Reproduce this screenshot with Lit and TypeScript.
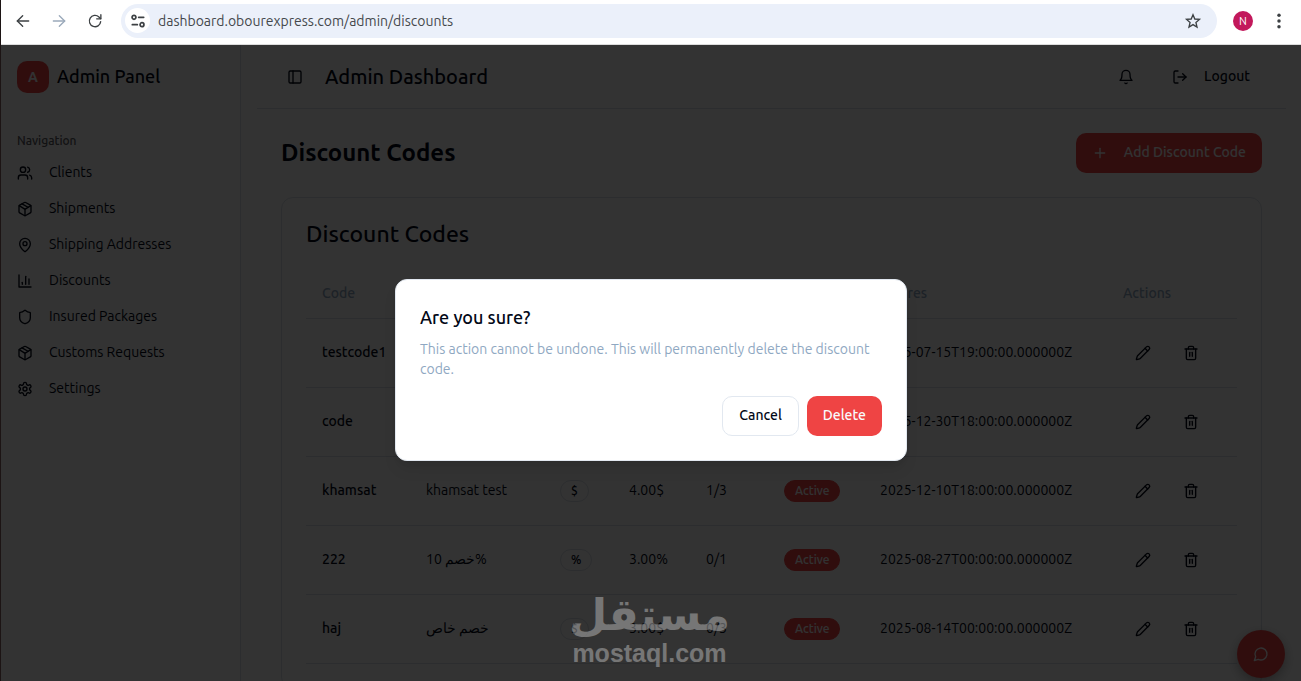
import { LitElement, html, css, svg } from "lit";
import { customElement, property, state } from "lit/decorators.js";

const ICONS: Record<string, unknown> = {
  users: svg`<path d="M16 21v-2a4 4 0 0 0-4-4H6a4 4 0 0 0-4 4v2"/><circle cx="9" cy="7" r="4"/><path d="M22 21v-2a4 4 0 0 0-3-3.87"/><path d="M16 3.13a4 4 0 0 1 0 7.75"/>`,
  box: svg`<path d="M11 21.73a2 2 0 0 0 2 0l7-4A2 2 0 0 0 21 16V8a2 2 0 0 0-1-1.73l-7-4a2 2 0 0 0-2 0l-7 4A2 2 0 0 0 3 8v8a2 2 0 0 0 1 1.73z"/><path d="M12 22V12"/><path d="m3.3 7 7.703 4.734a2 2 0 0 0 1.994 0L20.7 7"/><path d="m7.5 4.27 9 5.15"/>`,
  pin: svg`<path d="M20 10c0 4.993-5.539 10.193-7.399 11.799a1 1 0 0 1-1.202 0C9.539 20.193 4 14.993 4 10a8 8 0 0 1 16 0"/><circle cx="12" cy="10" r="3"/>`,
  chart: svg`<path d="M3 3v18h18"/><path d="M18 17V9"/><path d="M13 17V5"/><path d="M8 17v-3"/>`,
  shield: svg`<path d="M20 13c0 5-3.5 7.5-7.66 8.95a1 1 0 0 1-.67-.01C7.5 20.5 4 18 4 13V6a1 1 0 0 1 1-1c2 0 4.5-1.2 6.24-2.72a1.17 1.17 0 0 1 1.52 0C14.51 3.81 17 5 19 5a1 1 0 0 1 1 1z"/>`,
  gear: svg`<path d="M12.22 2h-.44a2 2 0 0 0-2 2v.18a2 2 0 0 1-1 1.73l-.43.25a2 2 0 0 1-2 0l-.15-.08a2 2 0 0 0-2.73.73l-.22.38a2 2 0 0 0 .73 2.73l.15.1a2 2 0 0 1 1 1.72v.51a2 2 0 0 1-1 1.74l-.15.09a2 2 0 0 0-.73 2.73l.22.38a2 2 0 0 0 2.73.73l.15-.08a2 2 0 0 1 2 0l.43.25a2 2 0 0 1 1 1.73V20a2 2 0 0 0 2 2h.44a2 2 0 0 0 2-2v-.18a2 2 0 0 1 1-1.73l.43-.25a2 2 0 0 1 2 0l.15.08a2 2 0 0 0 2.73-.73l.22-.39a2 2 0 0 0-.73-2.73l-.15-.08a2 2 0 0 1-1-1.74v-.5a2 2 0 0 1 1-1.74l.15-.09a2 2 0 0 0 .73-2.73l-.22-.38a2 2 0 0 0-2.73-.73l-.15.08a2 2 0 0 1-2 0l-.43-.25a2 2 0 0 1-1-1.73V4a2 2 0 0 0-2-2z"/><circle cx="12" cy="12" r="3"/>`,
  panel: svg`<rect x="3" y="3" width="18" height="18" rx="2"/><path d="M9 3v18"/>`,
  bell: svg`<path d="M6 8a6 6 0 0 1 12 0c0 7 3 9 3 9H3s3-2 3-9"/><path d="M10.3 21a1.94 1.94 0 0 0 3.4 0"/>`,
  logout: svg`<path d="M9 21H5a2 2 0 0 1-2-2V5a2 2 0 0 1 2-2h4"/><path d="m16 17 5-5-5-5"/><path d="M21 12H9"/>`,
  plus: svg`<path d="M5 12h14"/><path d="M12 5v14"/>`,
  pencil: svg`<path d="M21.174 6.812a1 1 0 0 0-3.986-3.987L3.842 16.174a2 2 0 0 0-.5.83l-1.321 4.352a.5.5 0 0 0 .623.622l4.353-1.32a2 2 0 0 0 .83-.497z"/><path d="m15 5 4 4"/>`,
  trash: svg`<path d="M3 6h18"/><path d="M19 6v14c0 1-1 2-2 2H7c-1 0-2-1-2-2V6"/><path d="M8 6V4c0-1 1-2 2-2h4c1 0 2 1 2 2v2"/><path d="M10 11v6"/><path d="M14 11v6"/>`,
  chat: svg`<path d="M7.9 20A9 9 0 1 0 4 16.1L2 22Z"/>`,
  back: svg`<path d="M20.500 12H3.500"/><path d="m11.500 4-8 8 8 8"/>`,
  forward: svg`<path d="M3.500 12h17"/><path d="m12.500 4 8 8-8 8"/>`,
  reload: svg`<path d="M20.500 13a8.500 8.500 0 1 1-2.600-7.100L20.500 8.500"/><path d="M20.800 2.500v6.300h-6.300"/>`,
  star: svg`<path d="m12 2.500 2.700 6.500 7 .6-5.300 4.600 1.600 6.900-6-3.700-6 3.700 1.600-6.900L2.300 9.600l7-.6z" stroke-linejoin="miter"/>`,
  tune: svg`<g stroke-width="2.600"><circle cx="6" cy="6.500" r="2.900"/><path d="M13 6.500h7.500"/><path d="M3.500 17.500H11"/><circle cx="18" cy="17.500" r="2.900"/></g>`,
  dots: svg`<g fill="currentColor" stroke="none"><circle cx="12" cy="3.500" r="2.600"/><circle cx="12" cy="12" r="2.600"/><circle cx="12" cy="20.500" r="2.600"/></g>`,
};

@customElement("line-icon")
class LineIcon extends LitElement {
  @property() name = "";
  static styles = css`
    :host { display: block; flex: none; width: 16px; height: 16px; }
    .glyph { display: block; width: 100%; height: 100%; overflow: visible; fill: none; stroke: currentColor; stroke-width: 2; stroke-linecap: round; stroke-linejoin: round; }
  `;
  render() {
    return html`<svg class="glyph" viewBox="0 0 24 24" aria-hidden="true">${ICONS[this.name]}</svg>`;
  }
}

const base = css`
  * { box-sizing: border-box; }
  button, input { font: inherit; color: inherit; margin: 0; padding: 0; border: 0; background: none; }
  button { cursor: pointer; }
  a { color: inherit; text-decoration: none; }
  h1, h2, p { margin: 0; }
  .text { padding-bottom: 2px; }
`;

@customElement("browser-bar")
class BrowserBar extends LitElement {
  static styles = [base, css`
    :host { display: flex; align-items: center; flex: none; height: 45px; padding: 0 14px 3px 14px; gap: 16px; background: #fff; border-bottom: 1px solid #dcdcdc; color: #3c4043; }
    .nav { display: flex; gap: 20px; padding-right: 2px; }
    .dim { color: #9aa9ba; }
    .address { display: flex; align-items: center; flex: 1; height: 34px; padding: 0 16px 0 4px; gap: 8px; border-radius: 17px; background: #ebf0fa; }
    .site { display: grid; place-items: center; width: 25px; height: 25px; border-radius: 50%; background: #fff; }
    .url { flex: 1; min-width: 0; font-size: 14px; line-height: 20px; outline: 0; color: #45484c; }
    .end { display: flex; align-items: center; gap: 18px; }
    .avatar { display: grid; place-items: center; width: 20px; height: 20px; border-radius: 50%; background: #c2185b; color: #fff; font-size: 11px; }
  `];
  render() {
    return html`
      <nav class="nav" aria-label="History">
        <button aria-label="Back"><line-icon name="back"></line-icon></button>
        <button class="dim" aria-label="Forward"><line-icon name="forward"></line-icon></button>
        <button aria-label="Reload"><line-icon name="reload"></line-icon></button>
      </nav>
      <div class="address">
        <button class="site" aria-label="Site information"><line-icon name="tune"></line-icon></button>
        <input class="url" aria-label="Address" .value=${"dashboard.obourexpress.com/admin/discounts"}>
        <button aria-label="Bookmark"><line-icon name="star"></line-icon></button>
      </div>
      <div class="end">
        <button class="avatar" aria-label="Profile">N</button>
        <button aria-label="Menu"><line-icon name="dots"></line-icon></button>
      </div>`;
  }
}

const NAV = [
  ["users", "Clients"],
  ["box", "Shipments"],
  ["pin", "Shipping Addresses"],
  ["chart", "Discounts"],
  ["shield", "Insured Packages"],
  ["box", "Customs Requests"],
  ["gear", "Settings"],
];

@customElement("side-bar")
class SideBar extends LitElement {
  static styles = [base, css`
    :host { display: block; flex: none; width: 240px; padding: 16px; border-right: 1px solid #dbe1ea; background: #fdfdfd; }
    .brand { display: flex; align-items: center; gap: 8px; font-size: 18px; font-weight: 550; line-height: 28px; }
    .logo { display: grid; place-items: center; width: 32px; height: 32px; border-radius: 10px; background: #ef4444; color: #f8fafc; font-size: 14px; font-weight: 700; }
    .label { margin-top: 32px; font-size: 12px; line-height: 32px; font-weight: 500; color: #5a5a62; }
    .list { display: flex; flex-direction: column; gap: 4px; }
    .item { display: flex; align-items: center; gap: 16px; height: 32px; font-size: 14px; line-height: 20px; }
  `];
  render() {
    return html`
      <div class="brand"><span class="logo">A</span><span class="text">Admin Panel</span></div>
      <p class="label">Navigation</p>
      <nav class="list">
        ${NAV.map(([icon, text]) => html`<a class="item" href="#"><line-icon name=${icon}></line-icon><span class="text">${text}</span></a>`)}
      </nav>`;
  }
}

interface Code { code: string; description: string; type: string; value: string; usage: string; expires: string; }

const CODES: Code[] = [
  { code: "testcode1", description: "", type: "$", value: "5.00$", usage: "0/1", expires: "2025-07-15T19:00:00.000000Z" },
  { code: "code", description: "", type: "$", value: "5.00$", usage: "0/1", expires: "2025-12-30T18:00:00.000000Z" },
  { code: "khamsat", description: "khamsat test", type: "$", value: "4.00$", usage: "1/3", expires: "2025-12-10T18:00:00.000000Z" },
  { code: "222", description: "10 خصم%", type: "%", value: "3.00%", usage: "0/1", expires: "2025-08-27T00:00:00.000000Z" },
  { code: "haj", description: "خصم خاص", type: "$", value: "3.00$", usage: "0/3", expires: "2025-08-14T00:00:00.000000Z" },
];

@customElement("discount-table")
class DiscountTable extends LitElement {
  static styles = [base, css`
    :host { display: block; }
    .table { width: 100%; table-layout: fixed; border-collapse: collapse; font-size: 14px; line-height: 20px; }
    .c1 { width: 104px; } .c2 { width: 134px; } .c3 { width: 69px; } .c4 { width: 77px; }
    .c5 { width: 78px; } .c6 { width: 96px; } .c7 { width: 243px; } .c8 { width: 130px; }
    th { height: 48px; padding: 0 0 2px 16px; text-align: left; font-weight: 500; color: #8fa8c2; border-bottom: 1px solid #dbe1ea; }
    td { height: 69px; padding: 0 0 0 16px; white-space: nowrap; border-bottom: 1px solid #dbe1ea; }
    td.text { padding-bottom: 2px; }
    .strong { font-weight: 500; }
    .badge { display: inline-block; padding: 2px 10px; border: 1px solid #dbe1ea; border-radius: 11px; font-size: 12px; line-height: 16px; font-weight: 550; }
    .active { border-color: #ef4444; background: #ef4444; color: #f8fafc; }
    .actions { display: flex; gap: 8px; }
    .act { display: grid; place-items: center; width: 40px; height: 40px; }
  `];
  render() {
    return html`
      <table class="table">
        <colgroup>${[1, 2, 3, 4, 5, 6, 7, 8].map((n) => html`<col class="c${n}">`)}</colgroup>
        <thead><tr>${["Code", "Description", "Type", "Value", "Usage", "Status", "Expires", "Actions"].map((h) => html`<th scope="col">${h}</th>`)}</tr></thead>
        <tbody>
          ${CODES.map((c) => html`<tr>
            <td class="text strong">${c.code}</td>
            <td class="text">${c.description}</td>
            <td><span class="badge">${c.type}</span></td>
            <td class="text">${c.value}</td>
            <td class="text">${c.usage}</td>
            <td><span class="badge active">Active</span></td>
            <td class="text">${c.expires}</td>
            <td><div class="actions">
              <button class="act" aria-label="Edit ${c.code}"><line-icon name="pencil"></line-icon></button>
              <button class="act" aria-label="Delete ${c.code}"><line-icon name="trash"></line-icon></button>
            </div></td>
          </tr>`)}
        </tbody>
      </table>`;
  }
}

@customElement("app-root")
class AppRoot extends LitElement {
  @state() private confirming = true;

  static styles = [base, css`
    :host { display: flex; flex-direction: column; height: 100vh; overflow: hidden; border-left: 1px solid #1c1414; box-sizing: border-box; font-family: Ubuntu, Roboto, "Noto Sans", sans-serif; color: #020817; background: #fff; }
    .page { position: relative; display: flex; flex: 1; min-height: 0; overflow: hidden; }
    .main { flex: 1; min-width: 0; padding: 0 15px 0 16px; }
    .top { display: flex; align-items: center; gap: 16px; height: 64px; padding: 0 24px; border-bottom: 1px solid #dbe1ea; }
    .toggle { display: grid; place-items: center; width: 28px; height: 28px; }
    .heading { flex: 1; font-size: 20px; line-height: 28px; font-weight: 550; }
    .tools { display: flex; align-items: center; gap: 14px; }
    .bell { display: grid; place-items: center; width: 40px; height: 40px; }
    .logout { display: flex; align-items: center; gap: 16px; height: 36px; padding: 0 12px; font-size: 14px; font-weight: 500; }
    .content { display: flex; flex-direction: column; gap: 24px; padding: 24px; }
    .bar { display: flex; align-items: center; justify-content: space-between; }
    .title { font-size: 24px; line-height: 32px; font-weight: 700; }
    .add { display: flex; align-items: center; gap: 16px; height: 40px; padding: 0 16px; border-radius: 10px; background: #ef4444; color: #f8fafc; font-size: 14px; font-weight: 500; }
    .card { padding: 24px; border: 1px solid #dbe1ea; border-radius: 12px; }
    .cardtitle { margin-bottom: 24px; font-size: 23px; line-height: 24px; font-weight: 550; }
    .fab { position: absolute; right: 16px; bottom: 3px; display: grid; place-items: center; width: 48px; height: 48px; border-radius: 50%; background: #ef4444; color: #f8fafc; box-shadow: 0 4px 12px rgba(0, 0, 0, .3); }
    .overlay { position: absolute; inset: 0; display: flex; align-items: center; justify-content: center; padding-top: 14px; background: rgba(0, 0, 0, .8); }
    .dialog { position: static; display: flex; flex-direction: column; gap: 17px; width: 512px; max-width: 100%; margin: 0; padding: 23px 24px 24px; border: 1px solid #e2e8f0; border-radius: 12px; background: #fff; color: #020817; box-shadow: 0 10px 15px -3px rgba(0, 0, 0, .1), 0 4px 6px -4px rgba(0, 0, 0, .1); }
    .ask { display: flex; flex-direction: column; gap: 8px; }
    .question { font-size: 18px; line-height: 28px; font-weight: 550; }
    .note { font-size: 14px; line-height: 20px; color: #8fa8c2; }
    .choices { display: flex; justify-content: flex-end; gap: 8px; }
    .btn { height: 40px; padding: 0 16px 2px; border: 1px solid #e2e8f0; border-radius: 10px; font-size: 14px; font-weight: 500; }
    .danger { border: 0; background: #ef4444; color: #f8fafc; }
    .mark { position: absolute; left: 0; right: 3px; bottom: 14px; display: flex; flex-direction: column; align-items: center; color: #fff; opacity: .33; pointer-events: none; }
    .script { font-family: "DejaVu Sans", sans-serif; font-weight: 700; font-size: 44px; line-height: 48px; }
    .latin { font-family: "Liberation Sans", sans-serif; font-weight: 700; font-size: 25px; line-height: 28px; }
  `];

  private close() { this.confirming = false; }

  render() {
    return html`
      <browser-bar></browser-bar>
      <div class="page">
        <side-bar></side-bar>
        <main class="main">
          <header class="top">
            <button class="toggle" aria-label="Toggle sidebar"><line-icon name="panel"></line-icon></button>
            <h2 class="heading">Admin Dashboard</h2>
            <div class="tools">
              <button class="bell" aria-label="Notifications"><line-icon name="bell"></line-icon></button>
              <button class="logout"><line-icon name="logout"></line-icon><span class="text">Logout</span></button>
            </div>
          </header>
          <div class="content">
            <div class="bar">
              <h1 class="title">Discount Codes</h1>
              <button class="add"><line-icon name="plus"></line-icon><span class="text">Add Discount Code</span></button>
            </div>
            <section class="card">
              <h2 class="cardtitle">Discount Codes</h2>
              <discount-table></discount-table>
            </section>
          </div>
        </main>
        <button class="fab" aria-label="Chat"><line-icon name="chat"></line-icon></button>
        ${this.confirming ? html`<div class="overlay">
          <dialog class="dialog" open aria-labelledby="question" aria-describedby="note">
            <div class="ask">
              <h2 class="question" id="question">Are you sure?</h2>
              <p class="note" id="note">This action cannot be undone. This will permanently delete the discount code.</p>
            </div>
            <div class="choices">
              <button class="btn" @click=${this.close}>Cancel</button>
              <button class="btn danger" @click=${this.close}>Delete</button>
            </div>
          </dialog>
        </div>` : ""}
        <div class="mark"><span class="script" lang="ar" dir="rtl">مستقل</span><span class="latin">mostaql.com</span></div>
      </div>`;
  }
}
